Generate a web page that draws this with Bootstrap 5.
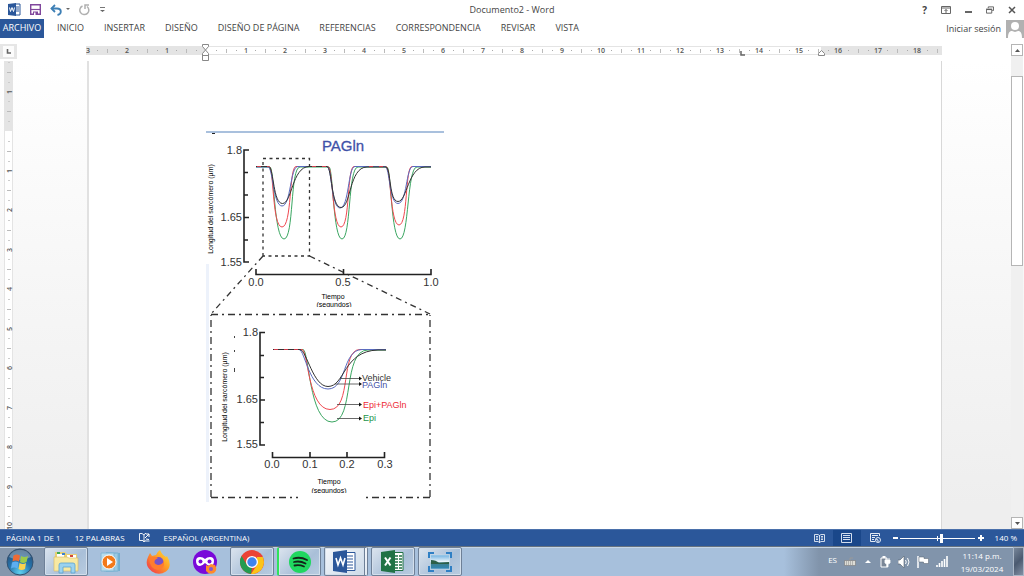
<!DOCTYPE html>
<html lang="es">
<head>
<meta charset="utf-8">
<meta name="viewport" content="width=device-width, initial-scale=1">
<title>Documento2 - Word</title>
<link href="https://cdn.jsdelivr.net/npm/bootstrap@5.3.0/dist/css/bootstrap.min.css" rel="stylesheet">
<style>
  body { height: 100vh; font-family: "Open Sans", "Noto Sans", sans-serif; font-size: 9px; line-height: 12px; color: #444; background: #fff; }
  svg { display: block; flex: none; }
  button, a { color: inherit; font-size: inherit; line-height: inherit; }
  .plain { border: 0; background: none; padding: 0; }
  .titlebar { display: grid; grid-template-columns: 1fr auto 1fr; height: 19px; }
  .titlebar .tools { gap: 14px; }
  .ribbon { height: 19px; }
  .ribbon .nav { gap: 20px; }
  .ribbon .nav-link { padding: 0; color: #444; line-height: 18px; height: 19px; }
  .ribbon .nav-link.file-tab { background: #2b579a; color: #fff; width: 44px; text-align: center; margin-right: -7px; }
  .workarea { background: linear-gradient(#fff 5%, #eeeeee 95%); min-height: 0; }
  .ruler-row { height: 23px; padding-top: 6px; }
  .canvas { min-height: 0; overflow: hidden; }
  .v-rule { width: 9px; margin: 0 4px; height: 100%; background: #fff; }
  .sheet { width: 855px; background: #fff; border-left: 2px solid #e1e1e1; border-right: 1px solid #d8d8d8; padding: 69px 0 0 117px; }
  .scroller { width: 13px; padding: 6px 1px 0 0; }
  .scroller button { height: 12px; border: 1px solid #b5b5b5; background: #fff; padding: 0; }
  .track { background: #f0f0f0; padding-top: 20px; }
  .thumb { height: 43%; border: 1px solid #b5b5b5; background: #fff; }
  .statusbar { height: 17px; background: #2b579a; border-top: 1px solid #4a70ab; color: #fff; font-size: 8px; }
  .view-on { background: #1a478a; width: 28px; height: 16px; }
  .zoombar { appearance: none; -webkit-appearance: none; width: 75px; height: 10px; margin: 0 3px 0 2px; background: linear-gradient(#fff, #fff) center / 100% 1px no-repeat, linear-gradient(#fff, #fff) center / 1px 5px no-repeat; }
  .zoombar::-webkit-slider-thumb { -webkit-appearance: none; width: 3px; height: 9px; background: #fff; border: 0; }
  .taskbar { height: 30px; border-top: 1px solid #66727f; background: linear-gradient(to right, #8597ad 0, #8597ad 44px, #a7c0dc 46px, #a7c0dc calc(100% - 240px), #8194ab calc(100% - 205px)); box-shadow: inset 0 1px #c5d5e6; color: #fff; font-size: 8px; }
  .taskbtn { width: 44px; height: 29px; display: flex; align-items: center; justify-content: center; border: 1px solid transparent; background: none; padding: 0; margin-right: 3px; }
  .taskbtn.startbtn { margin: 0; padding-right: 4px; }
  .taskbtn.pinned-first { margin-right: 1px; }
  .running { border-color: #6e8097; border-radius: 2px; background: linear-gradient(135deg, #dbe4ee, #a9bfd8 60%, #b9cce0); box-shadow: inset 0 0 0 1px #d3dfec; }
  .focused { background: linear-gradient(135deg, #f3f6fa, #ccdae8); }
  .stacked { border-right: 4px double #6e8097; }
  .playing { border-left: 2px solid #2fe35b; }
  .tray { gap: 7px; }
  .clock { width: 62px; margin-left: 3px; text-align: center; line-height: 13px; }
  .peek { width: 11px; height: 29px; border: 1px solid #aab7c7; background: linear-gradient(135deg, #78879a, #4b5a70 50%, #8290a4); padding: 0; }
  .num { font: 600 7px "Open Sans", sans-serif; fill: #555; text-anchor: middle; }
  .axis-num { font: 11px "Liberation Sans", sans-serif; fill: #333; }
  .axis-name { font: 7px "Liberation Sans", sans-serif; fill: #000; text-anchor: middle; }
  .series-name { font: 9px "Liberation Sans", sans-serif; }
  .plot-title { font: 15px "Liberation Sans", sans-serif; fill: #3f51a8; }
</style>
</head>
<body class="d-flex flex-column overflow-hidden">

<header>
  <div class="titlebar">
    <div class="d-flex align-items-center ps-2" style="gap:9px">
      <svg width="13" height="13" viewBox="0 0 13 13"><path d="M7 1h5v11H7z" fill="#fff" stroke="#2b579a"/><path d="M8 4h3M8 6h3M8 8h3" stroke="#2b579a"/><path d="M0 1l8-1v13l-8-1z" fill="#2b579a"/><path d="M1.500 4.500l1 4 1.500-4 1.500 4 1-4" fill="none" stroke="#fff"/></svg>
      <button class="plain" aria-label="Guardar"><svg width="11" height="11" viewBox="0 0 11 11"><path d="M.7.700h9.600v9.600H.7z" fill="#fff" stroke="#80479c" stroke-width="1.400"/><path d="M1 5.500h9" stroke="#80479c" stroke-width="1.200"/><path d="M3 7.500h5V11H3z" fill="#80479c"/><path d="M4 8.500h1.500V11H4z" fill="#fff"/></svg></button>
      <button class="plain d-flex align-items-center gap-1" aria-label="Deshacer"><svg width="12" height="12" viewBox="0 0 12 12"><path d="M1.500 4.500H7c5 0 5 5.500.500 6.500" fill="none" stroke="#3d7fb5" stroke-width="1.800"/><path d="M5 1L1.500 4.500 5 8" fill="none" stroke="#3d7fb5" stroke-width="1.800"/></svg><svg width="4" height="3"><path d="M0 0h4L2 2z" fill="#666"/></svg></button>
      <button class="plain d-flex align-items-center" style="gap:10px" aria-label="Repetir"><svg width="11" height="12" viewBox="0 0 11 12"><path d="M3.500 2A4.500 4.500 0 1 0 8 2.500" fill="none" stroke="#b0b0b0" stroke-width="1.500"/><path d="M6 5V1h4" fill="none" stroke="#b0b0b0" stroke-width="1.500"/></svg><svg width="5" height="6"><path d="M0 .5h5" stroke="#777"/><path d="M0 3h5L2.500 5z" fill="#666"/></svg></button>
    </div>
    <div class="doc-title align-self-center">Documento2 - Word</div>
    <div class="tools d-flex align-items-center justify-content-end pe-2">
      <button class="plain fw-bold" style="font-size:10px" aria-label="Ayuda">?</button>
      <button class="plain" aria-label="Opciones de la cinta"><svg width="10" height="8" viewBox="0 0 10 8"><path d="M.5.500h9v7h-9zM0 2h10M5 7V3.500M3.500 5L5 3.500 6.500 5" fill="none" stroke="#666"/></svg></button>
      <button class="plain" aria-label="Minimizar"><svg width="7" height="8"><path d="M0 6h7" stroke="#666" stroke-width="2"/></svg></button>
      <button class="plain" aria-label="Restaurar"><svg width="8" height="8" viewBox="0 0 9 8"><path d="M2.500 2V.500h6v4H7" fill="none" stroke="#555"/><path d="M.5 3.500h6v4h-6zM0 3h7" fill="none" stroke="#555"/></svg></button>
      <button class="plain" aria-label="Cerrar"><svg width="8" height="8"><path d="M1 1l6 6M7 1L1 7" stroke="#555" stroke-width="1.500"/></svg></button>
    </div>
  </div>
  <div class="ribbon d-flex align-items-center justify-content-between">
    <nav class="nav flex-nowrap align-items-center">
      <a class="nav-link file-tab" href="#">ARCHIVO</a>
      <a class="nav-link" href="#">INICIO</a>
      <a class="nav-link" href="#">INSERTAR</a>
      <a class="nav-link" href="#">DISEÑO</a>
      <a class="nav-link" href="#">DISEÑO DE PÁGINA</a>
      <a class="nav-link" href="#">REFERENCIAS</a>
      <a class="nav-link" href="#">CORRESPONDENCIA</a>
      <a class="nav-link" href="#">REVISAR</a>
      <a class="nav-link" href="#">VISTA</a>
    </nav>
    <div class="d-flex align-items-center" style="gap:5px">
      <a class="text-decoration-none" href="#">Iniciar sesión</a>
      <svg width="18" height="18"><path d="M0 0h18v18H0z" fill="#b1b1b1"/><circle cx="9" cy="6" r="4" fill="#fff"/><path d="M2 18c0-6 2-7 4-7l3 1 3-1c2 0 4 1 4 7z" fill="#fff"/></svg>
    </div>
  </div>
</header>

<main class="workarea flex-fill d-flex">
  <div class="flex-fill d-flex flex-column overflow-hidden">
    <div class="ruler-row d-flex">
      <button class="plain align-self-start" aria-label="Tabulación izquierda"><svg width="17" height="15"><path d="M0 0h17v15H0z" fill="#e6e6e6"/><path d="M3 2h11v11H3z" fill="#fcfcfc"/><path d="M7.500 5v4H11" fill="none" stroke="#666" stroke-width="1.600"/></svg></button>
      <div class="flex-fill d-flex justify-content-center"><svg id="hrule" width="856" height="17" viewBox="86 44 856 17"></svg></div>
    </div>
    <div class="canvas flex-fill d-flex">
      <div class="v-rule"><svg id="vrule" width="9" height="100%"></svg></div>
      <div class="flex-fill d-flex justify-content-center">
        <article class="sheet">
          <svg width="240" height="372" viewBox="206 130 240 372" role="img" aria-label="Longitud del sarcómero según el tiempo">
            <path d="M206 132h238" stroke="#a9c0dd" stroke-width="2"/><path d="M212 133.500h3" stroke="#222"/>
            <path d="M207.500 264v238" stroke="#edf2fb" stroke-width="3"/>
            <g fill="none" stroke="#333" stroke-width="1.300">
              <path d="M263 256V158.500h46.500V256z" stroke-dasharray="3 3.500"/>
              <path d="M263 256L211 314M309.500 256L430 314" stroke-dasharray="6 4 2 4"/>
              <path d="M211 314.500H430M211 497V315M430 497V315M211 497.500h87M430 497.500h-68" stroke-dasharray="7 4 2 4"/>
            </g>
            <path d="M234.500 336v2M234.500 350v2M234.500 368v4" stroke="#444"/>
            <g fill="none" stroke="#222" stroke-width="1.600">
              <path d="M249 150H244V262H249M244 172.500h4M244 195h4M244 217.500h5M244 240h4"/>
              <path d="M256 269v5.500H431V269M343.500 269v5"/>
              <path d="M265 332.500H260V445H265M260 355.500h4M260 377.500h4M260 400h5M260 422.500h4"/>
              <path d="M272.500 452v5.500H384.500V452M310 452v5M347 452v5"/>
            </g>
            <g class="axis-num" text-anchor="end">
              <text x="242" y="154">1.8</text><text x="242" y="221">1.65</text><text x="242" y="266">1.55</text>
              <text x="258" y="336">1.8</text><text x="258" y="403">1.65</text><text x="258" y="448">1.55</text>
            </g>
            <g class="axis-num" text-anchor="middle">
              <text x="256" y="286">0.0</text><text x="343" y="286">0.5</text><text x="431" y="286">1.0</text>
              <text x="272" y="468">0.0</text><text x="310" y="468">0.1</text><text x="347" y="468">0.2</text><text x="385" y="468">0.3</text>
            </g>
            <text class="plot-title" x="343" y="151" text-anchor="middle" stroke="#3f51a8" stroke-width=".3">PAGln</text>
            <g class="axis-name">
              <text x="333" y="299">Tiempo</text><text x="334" y="307">(segundos)</text>
              <text x="329" y="484">Tiempo</text><text x="329" y="493">(segundos)</text>
              <text transform="translate(213 209) rotate(-90)">Longitud del sarcómero (µm)</text>
              <text transform="translate(227 397) rotate(-90)">Longitud del sarcómero (µm)</text>
            </g>
            <path d="M312 307h44v3h-44zM308 493h44v3h-44z" fill="#fff"/>
            <g fill="none">
              <g stroke="#3aa661">
                <path d="M256 167H270C274 167 274 239 284 239S290 167 300 167H329C333 167 333 239 342 239S348 167 358 167H387C391 167 391 239 400 239S407 167 417 167H431"/>
                <path d="M273 349.500H303C309 349.500 309 422 332 422S342 350 368 350H386"/>
              </g>
              <g stroke="#f04850">
                <path d="M256 166.500H269C274 167 272 227 282 227S289 166.500 296 166.500H328C333 167 332 227 341 227S347 166.500 354 166.500H386C391 167 390 225 399 225S405 166.500 412 166.500H431"/>
                <path d="M273 349.500H302C308 349.500 308 409.500 330 409.500S340 349.500 360 349.500H386"/>
              </g>
              <g stroke="#5a6cc0">
                <path d="M256 167H268C273 167 273 206 282 206S290 166.500 298 166.500H327C332 167 331 208 340 208S348 166.500 355 166.500H385C390 167 389 203.500 398 203.500S406 166.500 413 166.500H431"/>
                <path d="M273 349.500H299C305 350 309 389 328 389S342 350 362 349.500H386"/>
              </g>
              <g stroke="#333">
                <path d="M256 166.500H269C274 170 273 203.500 282.500 203.500S292 167 309 166.500H327C332 167 331 207.500 341 207.500S349 167 367 167H386C391 169 389 201.500 398 201.500S408 167 425 167H431"/>
                <path d="M273 349.500H300C307 351 313 386.500 328 386.500C345 386.500 343 351 378 350H386"/>
              </g>
              <path d="M257 166.500h12M312 166.500h15M369 166.500h16M274 349.500h26" stroke="#d23c4c" stroke-dasharray="4 6"/>
            </g>
            <path d="M340 378.500h20M335 384h25M337 404.500h23M337 418.500h23" stroke="#444" stroke-width=".8"/>
            <path d="M359 376.500l3 2-3 2zM359 382l3 2-3 2zM359 402.500l3 2-3 2zM359 416.500l3 2-3 2z" fill="#111"/>
            <g class="series-name">
              <text x="362" y="381" fill="#333">Vehicle</text><text x="362" y="388" fill="#3f51a8">PAGln</text>
              <text x="363" y="408" fill="#ee2a35">Epi+PAGln</text><text x="363" y="421" fill="#1b944a">Epi</text>
            </g>
          </svg>
        </article>
      </div>
    </div>
  </div>
  <div class="scroller d-flex flex-column">
    <button class="d-flex align-items-center justify-content-center" aria-label="Subir"><svg width="5" height="3"><path d="M0 3h5L2.500 0z" fill="#555"/></svg></button>
    <div class="track flex-fill"><div class="thumb"></div></div>
    <button class="d-flex align-items-center justify-content-center" aria-label="Bajar"><svg width="5" height="3"><path d="M0 0h5L2.500 3z" fill="#555"/></svg></button>
  </div>
</main>

<footer>
  <div class="statusbar d-flex align-items-center justify-content-between">
    <div class="d-flex align-items-center" style="gap:14px;padding-left:6px">
      <span>PÁGINA 1 DE 1</span><span>12 PALABRAS</span>
      <svg width="11" height="10" viewBox="0 0 11 10"><path d="M5 2L3 .500H.500v7H4l1 1.500 1-1.500M5 2v7M5 2l1-1.500h1M6 8h4.500" fill="none" stroke="#fff" stroke-width=".9"/><path d="M6 5l4-4M7 1h3v3M7 6l3 .500" fill="none" stroke="#fff"/></svg>
      <span>ESPAÑOL (ARGENTINA)</span>
    </div>
    <div class="d-flex align-items-center" style="padding-right:7px">
      <button class="plain" style="margin-right:8px" aria-label="Modo de lectura"><svg width="11" height="9" viewBox="0 0 11 9"><path d="M5.500 1v8M5.500 1.500L4 .500H.500v7H4l1.500 1 1.500-1h3.500v-7H7zM2 2.500h2M2 4h2M2 5.500h2M7 2.500h2M7 4h2M7 5.500h2" fill="none" stroke="#e4ebf5" stroke-width=".9"/></svg></button>
      <button class="plain view-on d-flex align-items-center justify-content-center" aria-label="Diseño de impresión"><svg width="11" height="10"><path d="M.5.500h10v9H.500zM2 2.500h7M2 4.500h7M2 6.500h7" fill="none" stroke="#d3deee"/></svg></button>
      <button class="plain" style="margin:0 12px 0 9px" aria-label="Diseño web"><svg width="11" height="10"><path d="M5 8.500H.500v-8h9V3M2 2.500h6M2 4.500h3M2 6.500h2" fill="none" stroke="#e4ebf5"/><circle cx="8" cy="7" r="2.500" fill="#2b579a" stroke="#e4ebf5"/><path d="M6 6l2 1v2" stroke="#e4ebf5" fill="none"/></svg></button>
      <button class="plain" aria-label="Alejar"><svg width="5" height="6"><path d="M0 3h5" stroke="#fff" stroke-width="2"/></svg></button>
      <input class="zoombar" type="range" min="0" max="100" value="56" aria-label="Zoom">
      <button class="plain" aria-label="Acercar"><svg width="6" height="6"><path d="M0 3h6M3 0v6" stroke="#fff" stroke-width="2"/></svg></button>
      <span style="margin-left:11px">140 %</span>
    </div>
  </div>

  <div class="taskbar d-flex justify-content-between">
    <div class="d-flex">
      <button class="taskbtn startbtn" aria-label="Inicio"><svg width="28" height="28" viewBox="0 0 28 28"><defs><radialGradient id="orb" cx=".5" cy=".9" r=".9"><stop offset="0" stop-color="#5fd0ef"/><stop offset=".5" stop-color="#2674ac"/><stop offset="1" stop-color="#284a70"/></radialGradient></defs><circle cx="14" cy="14" r="13" fill="url(#orb)" stroke="#34516f"/><path d="M3 9a12 12 0 0 1 22 0q-11 6-22 0" fill="#fff" opacity=".3"/><path d="M7.500 7.500q3.500-2 6.500 0l-1 6q-3.500-2-6.500 0z" fill="#ef6b35"/><path d="M15 8q3.500 2 7 0l-1.500 6q-3 2-6.500 0z" fill="#9ccb4a"/><path d="M6 14.500q3.500-2 6.500 0l-1 6q-3.500-2-6.500 0z" fill="#5daef0"/><path d="M13.500 15q3.500 2 6.500 0l-1 6q-3.500 2-6.500 0z" fill="#fbd34f"/></svg></button>
      <button class="taskbtn running pinned-first" aria-label="Explorador"><svg width="26" height="24" viewBox="0 0 26 24"><path d="M2 2h10l2 2h10v17H2z" fill="#e7cf75"/><path d="M4 4h7v3H4zM14 5h9v3h-9z" fill="#fff"/><path d="M4 2h3v2H4z" fill="#3eaa4d"/><path d="M9 3h3v2H9z" fill="#3e82d0"/><path d="M17 5h3v2h-3z" fill="#d34839"/><path d="M1 7h13l2 1h9v13H1z" fill="#f8e9a2" stroke="#d8b95e" stroke-width=".6"/><path d="M6 23v-8q0-2 2-2h12q2 0 2 2v8h-4v-6h-8v6z" fill="#9bd2ef" stroke="#5ba2cf" stroke-width=".8"/></svg></button>
      <button class="taskbtn" aria-label="Reproductor"><svg width="22" height="22" viewBox="0 0 22 22"><path d="M6 1l14 1v18L6 21z" fill="#71aed0"/><path d="M4 3l14-1v18H4z" fill="#9bcbe2" stroke="#7fb3d2"/><path d="M1 2h13v18H1z" fill="#b7dcec" stroke="#82b6d4"/><circle cx="9" cy="11" r="7" fill="#f27a1a" stroke="#fff"/><path d="M7 7l6 4-6 4z" fill="#fff"/></svg></button>
      <button class="taskbtn" aria-label="Firefox"><svg width="24" height="24" viewBox="0 0 24 24"><defs><linearGradient id="fox" x1="1" y1="0" x2="0" y2="1"><stop offset="0" stop-color="#ffe83b"/><stop offset=".45" stop-color="#ff9b25"/><stop offset="1" stop-color="#ef2752"/></linearGradient></defs><path d="M2 7l2-4 2 3 4-1q1-3 4-5 2 5 6 7l1-1q6 10-1 15.500-7 4.500-14 0Q-2 16 2 7z" fill="url(#fox)"/><circle cx="12.500" cy="12" r="5" fill="#7653c8"/><path d="M3 9q5-4 9-1l-3 2q-2 4 3 5 4 0 6-4 1 8-6 9Q4 19 3 9z" fill="#ff7c2e"/></svg></button>
      <button class="taskbtn" aria-label="Firefox privado"><svg width="24" height="24" viewBox="0 0 24 24"><circle cx="12" cy="12" r="12" fill="#7909d9"/><path d="M3 11q0-4 4-4 3 0 5 2 2-2 5-2 4 0 4 4 0 5-4 5-2 0-5-3-3 3-5 3-4 0-4-5z" fill="#fff"/><circle cx="7.500" cy="11.500" r="2" fill="#7909d9"/><circle cx="16.500" cy="11.500" r="2" fill="#7909d9"/><path d="M13 15l2 1 3-2 4 1q3 5-1 8-5 2-8-2z" fill="#ff8a2b"/><circle cx="18" cy="19" r="2" fill="#805bd0"/></svg></button>
      <button class="taskbtn running" aria-label="Chrome"><svg width="24" height="24" viewBox="0 0 24 24"><circle cx="12" cy="12" r="12" fill="#ea4335"/><path d="M1.600 6L7 15l5 3-1 6A12 12 0 0 1 1.600 6z" fill="#239b50"/><path d="M22.800 7A12 12 0 0 1 11 24l6-9V7z" fill="#fbc417"/><circle cx="12" cy="12" r="6" fill="#fff"/><circle cx="12" cy="12" r="4.700" fill="#3d83ee"/></svg></button>
      <button class="taskbtn running playing" aria-label="Spotify"><svg width="22" height="22" viewBox="0 0 22 22"><circle cx="11" cy="11" r="11" fill="#20d760"/><path d="M4.500 7.500q7-2 13.500 1.500M5 11q6-1.500 11.500 1.500M5.500 14.500q5-1 9.500 1" fill="none" stroke="#14241a" stroke-width="1.800" stroke-linecap="round"/></svg></button>
      <button class="taskbtn running focused stacked" aria-label="Word"><svg width="24" height="23" viewBox="0 0 24 23"><path d="M12 2.500h10v18H12z" fill="#fff" stroke="#2b579a"/><path d="M14 6h6M14 9h6M14 12h6M14 15h6M14 18h6" stroke="#2b579a"/><path d="M0 2l14-2v23L0 21z" fill="#2b579a"/><path d="M3 8l2 7 2.500-7L10 15l2-7" fill="none" stroke="#fff" stroke-width="1.600"/></svg></button>
      <button class="taskbtn running" aria-label="Excel"><svg width="24" height="23" viewBox="0 0 24 23"><path d="M12 2.500h10v18H12z" fill="#fff" stroke="#207245"/><path d="M14 6h3M18 6h3M14 9h3M18 9h3M14 12h3M18 12h3M14 15h3M18 15h3M14 18h3M18 18h3" stroke="#207245" stroke-width="1.600"/><path d="M0 2l14-2v23L0 21z" fill="#207245"/><path d="M4 7.500l5.500 8M9.500 7.500l-5.500 8" stroke="#fff" stroke-width="2"/></svg></button>
      <button class="taskbtn running" aria-label="Visor de imágenes"><svg width="24" height="20" viewBox="0 0 24 20"><defs><linearGradient id="scene" x1="0" y1="0" x2="0" y2="1"><stop offset="0" stop-color="#6fb0e0"/><stop offset=".5" stop-color="#f2f8fb"/><stop offset=".55" stop-color="#3f7f88"/><stop offset="1" stop-color="#2f86b8"/></linearGradient></defs><path d="M1 6V1h5M18 1h5v5M1 14v5h5M18 19h5v-5" fill="none" stroke="#2f7fc4" stroke-width="2"/><path d="M2.500 3h19v14h-19z" fill="url(#scene)" stroke="#cfe2f0" stroke-width=".6"/><path d="M3 8q5 0 8 3l10-1v2H3z" fill="#2c5f48"/></svg></button>
    </div>
    <div class="d-flex align-items-center">
      <div class="tray d-flex align-items-center">
        <span class="pb-1">ES</span>
        <svg width="12" height="9"><path d="M.5 3.500h11v5H.500z" fill="#dcdcd6" stroke="#777" stroke-width=".6"/><path d="M2 5h8M2 7h8" stroke="#888" stroke-dasharray="1 1"/><path d="M6 3V1h3" fill="none" stroke="#999"/></svg>
        <button class="plain" style="padding:0 2px" aria-label="Iconos ocultos"><svg width="6" height="3"><path d="M0 3h6L3 0z" fill="#fff"/></svg></button>
        <svg width="11" height="12" viewBox="0 0 11 12"><path d="M1 2h6v9H1z" fill="#7a8797" stroke="#fff"/><path d="M2.500 0h3v2h-3z" fill="#fff"/><path d="M5 4h5v3L8 8v3H7V8L5 7zM6 2v2M9 2v2" fill="#fff" stroke="#fff" stroke-width=".8"/></svg>
        <svg width="12" height="12" viewBox="0 0 12 12"><path d="M0 4h2l4-4v12L2 8H0z" fill="#fff" stroke="#56606c" stroke-width=".6"/><path d="M7.500 4q1.500 2 0 4M9.500 2q3 4 0 8" fill="none" stroke="#fff"/></svg>
        <svg width="12" height="12" viewBox="0 0 12 12"><path d="M1 0v12" stroke="#fff" stroke-width="1.500"/><path d="M2 1h5v1.500h4.500v5H6.500V6H2z" fill="#fff" stroke="#56606c" stroke-width=".5"/></svg>
        <svg width="12" height="11" viewBox="0 0 12 11"><path d="M1 11V9M3.500 11V7M6 11V5M8.500 11V3M11 11V0" stroke="#fff" stroke-width="1.600"/></svg>
      </div>
      <div class="clock">11:14 p.m.<br>19/03/2024</div>
      <button class="peek" aria-label="Mostrar escritorio"></button>
    </div>
  </div>
</footer>

<script src="https://cdn.jsdelivr.net/npm/bootstrap@5.3.0/dist/js/bootstrap.bundle.min.js"></script>
<script>
  // Both rulers are in centimetres: 79 px for every two at 140 % zoom.
  const quarter = 79 / 8;

  let h = '<path d="M86 46h856v9H86z" fill="#e4e4e4"/><path d="M206 46h615v9H206z" fill="#fff"/><path d="M206 46.500h615M206 54.500h615" stroke="#e4e4e4"/>';
  for (let i = -12; i <= 74; i++) {
    const x = Math.round(206 + i * quarter), k = Math.abs(i) % 4;
    if (k === 0) { if (i) h += `<text class="num" x="${x}" y="53">${Math.abs(i / 4)}</text>`; }
    else h += k === 2 ? `<path d="M${x}.5 49v4" stroke="#bbb"/>` : `<path d="M${x} 50.500h1" stroke="#aaa"/>`;
  }
  h += '<path d="M202.500 44.500h6v2l-3 3.500 3 3.500v7h-6v-7l3-3.500-3-3.500zM202.500 55.500h6" fill="#fff" stroke="#888"/>';
  h += '<path d="M741 51v4h4" fill="none" stroke="#666" stroke-width="1.500"/><path d="M818.500 55.500v-2l3-3 3 3v2z" fill="#fff" stroke="#888"/>';
  document.getElementById('hrule').innerHTML = h;

  const vrule = document.getElementById('vrule');
  const span = vrule.parentElement.clientHeight;
  let v = '<path d="M0 0h9v70H0z" fill="#e4e4e4"/><path d="M.5 70V2000M8.500 70V2000" stroke="#e4e4e4"/>';
  for (let i = -7; 70 + i * quarter < span; i++) {
    const y = Math.round(70 + i * quarter), k = Math.abs(i) % 4;
    if (k === 0) { if (i) v += `<text class="num" transform="translate(8 ${y}) rotate(-90)">${Math.abs(i / 4)}</text>`; }
    else v += k === 2 ? `<path d="M3 ${y}.5h4" stroke="#bbb"/>` : `<path d="M4 ${y}.5h2" stroke="#ccc"/>`;
  }
  vrule.innerHTML = v;
</script>
</body>
</html>
